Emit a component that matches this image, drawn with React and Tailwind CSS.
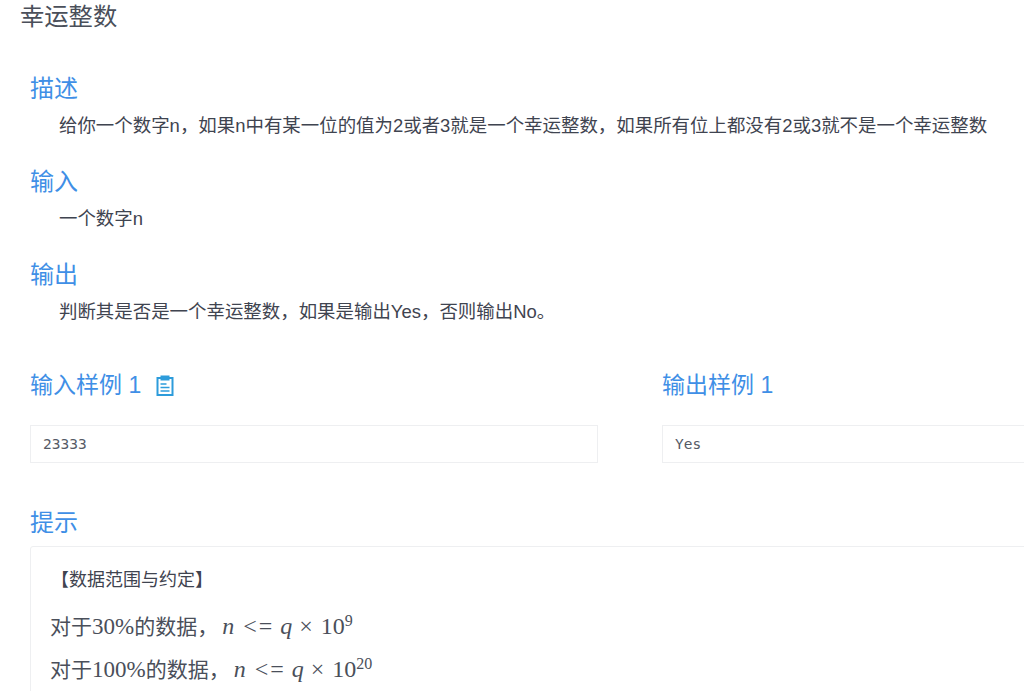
const cjk = "font-['Liberation_Sans','Noto_Sans_CJK_SC',sans-serif]";
const heading = "text-[24px] leading-[32px] text-[#3f8fe6]";
const body = "mt-[7px] pl-[29px] text-[18.45px] leading-[28px] text-[#3f4450]";
const serif = "font-['Liberation_Serif',serif]";

function Section({ title, children, className }) {
  return (
    <div className={className}>
      <h2 className={heading}>{title}</h2>
      <p className={body}>{children}</p>
    </div>
  );
}

function ClipIcon() {
  return (
    <svg width="18" height="21" viewBox="0 0 18 21" fill="none" stroke="#2d9cdb" strokeWidth="2">
      <rect x="1.5" y="3" width="15" height="17" />
      <rect x="5" y="1" width="8" height="4" fill="#2d9cdb" strokeWidth="1" />
      <path d="M4.5 9h6M4.5 12.5h9M4.5 16h9" strokeWidth="1.5" />
    </svg>
  );
}

function Sample({ title, value, icon }) {
  return (
    <div className="w-[568px] shrink-0">
      <div className="flex items-center gap-[15px] text-[23px] leading-[32px] text-[#3f8fe6]">
        <span>{title}</span>
        {icon && <ClipIcon />}
      </div>
      <div className="mt-[24px] h-[38px] border border-[#eeeff1] pl-[12px] font-['DejaVu_Sans_Mono',monospace] text-[14.5px] leading-[36px] text-[#555a66]">
        {value}
      </div>
    </div>
  );
}

function Formula({ pct, exp, className }) {
  return (
    <p className={`flex items-baseline pl-[19px] text-[21px] leading-[44px] text-[#4a4f5a] ${className}`}>
      <span>对于</span>
      <span className={`${serif} text-[23px]`}>{pct}%</span>
      <span>的数据，</span>
      <span className={`${serif} ml-[4px] flex items-baseline text-[24px]`}>
        <i>n</i>
        <span className="ml-[9px] tracking-[2px]">&lt;=</span>
        <i className="ml-[6px]">q</i>
        <span className="ml-[7px]">×</span>
        <span className="ml-[8px]">10</span>
        <sup className="text-[16px]">{exp}</sup>
      </span>
    </p>
  );
}

export default function App() {
  return (
    <div className={`h-[691px] w-[1024px] overflow-hidden bg-white ${cjk}`}>
      <h1 className="pl-[20px] pt-[1px] text-[24.3px] leading-[32px] text-[#4a4f5a]">幸运整数</h1>
      <div className="pl-[30px]">
        <Section title="描述" className="mt-[40px]">
          给你一个数字n，如果n中有某一位的值为2或者3就是一个幸运整数，如果所有位上都没有2或3就不是一个幸运整数
        </Section>
        <Section title="输入" className="mt-[26px]">一个数字n</Section>
        <Section title="输出" className="mt-[26px]">判断其是否是一个幸运整数，如果是输出Yes，否则输出No。</Section>
        <div className="mt-[43px] flex gap-[64px]">
          <Sample title="输入样例 1" value="23333" icon />
          <Sample title="输出样例 1" value="Yes" />
        </div>
        <h2 className={`mt-[44px] ${heading}`}>提示</h2>
        <div className="mt-[7px] h-[200px] w-[1100px] rounded-t-[3px] border border-[#eeeff1] pt-[19px]">
          <p className="pl-[20px] text-[18px] leading-[28px] text-[#3f4450]">【数据范围与约定】</p>
          <Formula pct="30" exp="9" className="mt-[10px]" />
          <Formula pct="100" exp="20" className="-mt-[2px]" />
        </div>
      </div>
    </div>
  );
}
